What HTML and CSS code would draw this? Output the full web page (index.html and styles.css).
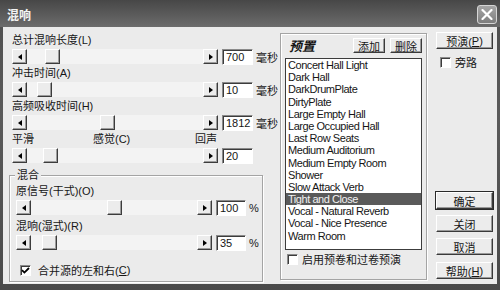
FILE: index.html
```html
<!DOCTYPE html>
<html lang="zh-CN">
<head>
<meta charset="utf-8">
<title>混响</title>
<link rel="stylesheet" href="styles.css">
</head>
<body>
<div class="window">
  <div class="titlebar">
    <span class="title">混响</span>
    <span class="close"><svg width="12" height="11" viewBox="0 0 12 11"><path d="M1.5 1 L10.5 10 M10.5 1 L1.5 10" stroke="#fff" stroke-width="2.2" stroke-linecap="round"/></svg></span>
  </div>
  <div class="client">
    <div class="left">
      <div class="label">总计混响长度(L)</div>
      <div class="slider">
        <span class="arrow"><i class="tri-l"></i></span>
        <span class="track"><span class="thumb" style="margin-left:18px"></span></span>
        <span class="arrow"><i class="tri-r"></i></span>
        <span class="field">700</span>
        <span class="unit">毫秒</span>
      </div>
      <div class="label">冲击时间(A)</div>
      <div class="slider">
        <span class="arrow"><i class="tri-l"></i></span>
        <span class="track"><span class="thumb" style="margin-left:10px"></span></span>
        <span class="arrow"><i class="tri-r"></i></span>
        <span class="field">10</span>
        <span class="unit">毫秒</span>
      </div>
      <div class="label">高频吸收时间(H)</div>
      <div class="slider">
        <span class="arrow"><i class="tri-l"></i></span>
        <span class="track"><span class="thumb" style="margin-left:73px"></span></span>
        <span class="arrow"><i class="tri-r"></i></span>
        <span class="field">1812</span>
        <span class="unit">毫秒</span>
      </div>
      <div class="label scale"><span>平滑</span><span>感觉(C)</span><span>回声</span></div>
      <div class="slider">
        <span class="arrow"><i class="tri-l"></i></span>
        <span class="track"><span class="thumb" style="margin-left:16px"></span></span>
        <span class="arrow"><i class="tri-r"></i></span>
        <span class="field">20</span>
      </div>

      <div class="group mix">
        <span class="legend">混合</span>
        <div class="label">原信号(干式)(O)</div>
        <div class="slider">
          <span class="arrow"><i class="tri-l"></i></span>
          <span class="track"><span class="thumb" style="margin-left:76px"></span></span>
          <span class="arrow"><i class="tri-r"></i></span>
          <span class="field">100</span>
          <span class="unit">%</span>
        </div>
        <div class="label gap">混响(湿式)(R)</div>
        <div class="slider">
          <span class="arrow"><i class="tri-l"></i></span>
          <span class="track"><span class="thumb" style="margin-left:11px"></span></span>
          <span class="arrow"><i class="tri-r"></i></span>
          <span class="field">35</span>
          <span class="unit">%</span>
        </div>
        <div class="check merge"><span class="box"><svg width="9" height="9" viewBox="0 0 9 9"><path d="M1 4.2 L3.4 6.6 L8 2" fill="none" stroke="#000" stroke-width="1.8"/></svg></span>合并源的左和右(<u>C</u>)</div>
      </div>
    </div>

    <div class="group presets">
      <div class="presets-head">
        <span class="presets-title">预置</span>
        <span class="btn small add">添加</span>
        <span class="btn small">删除</span>
      </div>
      <ul class="list">
        <li>Concert Hall Light</li>
        <li>Dark Hall</li>
        <li>DarkDrumPlate</li>
        <li>DirtyPlate</li>
        <li>Large Empty Hall</li>
        <li>Large Occupied Hall</li>
        <li>Last Row Seats</li>
        <li>Medium Auditorium</li>
        <li>Medium Empty Room</li>
        <li>Shower</li>
        <li>Slow Attack Verb</li>
        <li class="selected">Tight and Close</li>
        <li>Vocal - Natural Reverb</li>
        <li>Vocal - Nice Presence</li>
        <li>Warm Room</li>
      </ul>
      <div class="check preroll"><span class="box"></span>启用预卷和过卷预演</div>
    </div>

    <div class="right">
      <span class="btn">预演(<u>P</u>)</span>
      <div class="check bypass"><span class="box"></span>旁路</div>
      <div class="bottom-buttons">
        <span class="btn default">确定</span>
        <span class="btn">关闭</span>
        <span class="btn">取消</span>
        <span class="btn">帮助(<u>H</u>)</span>
      </div>
    </div>
  </div>
</div>
</body>
</html>
```

FILE: styles.css
```css
* { box-sizing: border-box; }
html, body { margin: 0; padding: 0; }
body {
  width: 500px;
  height: 290px;
  overflow: hidden;
  font-family: "Liberation Sans", "Noto Sans CJK SC", sans-serif;
  font-size: 11px;
  color: #161616;
  background: #505050;
}
.window {
  width: 500px;
  height: 290px;
  display: flex;
  flex-direction: column;
  background: linear-gradient(#4e4e4e, #5a5a5a 40%, #4a4a4a);
}
.titlebar {
  height: 27px;
  flex: none;
  display: flex;
  align-items: center;
  justify-content: space-between;
  padding: 1px 3px 0 7px;
  background: linear-gradient(#474747, #6c6c6c);
}
.title {
  color: #f4f4f4;
  font-weight: bold;
  font-size: 12px;
  font-family: "Noto Sans CJK SC", sans-serif;
}
.close {
  width: 20px;
  height: 19px;
  border: 1px solid #d6d6d6;
  border-radius: 3px;
  background: linear-gradient(#a6a6a6, #7e7e7e);
  display: flex;
  align-items: center;
  justify-content: center;
}
.client {
  flex: none;
  height: 257px;
  margin: 0 3px;
  background: #ebebeb;
  display: flex;
}
.left {
  width: 277px;
  flex: none;
  padding: 5px 0 0 6px;
}
.label {
  height: 16px;
  line-height: 16px;
  padding-left: 3px;
  white-space: nowrap;
}
.scale {
  display: grid;
  grid-template-columns: 81px 102px auto;
}
.slider {
  height: 17px;
  display: flex;
  align-items: center;
  padding-left: 3px;
  white-space: nowrap;
}
.arrow {
  flex: none;
  width: 15px;
  height: 15px;
  background: #ececec;
  border: 1px solid;
  border-color: #fff #3c3c3c #3c3c3c #fff;
  box-shadow: inset -1px -1px 0 #9c9c9c;
  display: flex;
  align-items: center;
  justify-content: center;
}
.tri-l {
  width: 0;
  height: 0;
  border-top: 3.5px solid transparent;
  border-bottom: 3.5px solid transparent;
  border-right: 4px solid #000;
}
.tri-r {
  width: 0;
  height: 0;
  border-top: 3.5px solid transparent;
  border-bottom: 3.5px solid transparent;
  border-left: 4px solid #000;
}
.track {
  flex: none;
  width: 176px;
  height: 15px;
  background: #f3f3f3;
  display: flex;
}
.thumb {
  flex: none;
  width: 15px;
  height: 15px;
  background: #ececec;
  border: 1px solid;
  border-color: #fff #3c3c3c #3c3c3c #fff;
  box-shadow: inset -1px -1px 0 #9c9c9c;
}
.field {
  flex: none;
  width: 31px;
  height: 16px;
  margin-left: 4px;
  background: #fff;
  border: 1px solid;
  border-color: #8a8a8a #fff #fff #8a8a8a;
  box-shadow: inset 1px 1px 0 #3c3c3c;
  padding: 1px 0 0 3px;
  line-height: 13px;
  font-size: 11px;
}
.unit {
  margin-left: 3px;
}

.group {
  position: relative;
  border: 1px solid #a4a4a4;
  box-shadow: inset 1px 1px 0 #fff, 1px 1px 0 #fff;
}
.legend {
  position: absolute;
  top: -9px;
  left: 5px;
  padding: 0 2px;
  background: #ebebeb;
  line-height: 16px;
}
.mix {
  width: 254px;
  height: 107px;
  margin-top: 11px;
  padding: 7px 0 0 3px;
}
.mix .track { width: 166px; }
.mix .field { width: 30px; }
.label.gap { margin-top: 2px; }
.check {
  display: flex;
  align-items: center;
  white-space: nowrap;
}
.box {
  flex: none;
  width: 11px;
  height: 11px;
  background: #fff;
  border: 1px solid;
  border-color: #8a8a8a #fff #fff #8a8a8a;
  box-shadow: inset 1px 1px 0 #3c3c3c;
  display: flex;
  align-items: center;
  justify-content: center;
}
.merge {
  height: 16px;
  margin: 11px 0 0 7px;
}
.merge .box { margin-right: 7px; }

.presets {
  flex: none;
  width: 147px;
  height: 247px;
  margin-top: 6px;
  padding: 4px 4px 0 4px;
}
.presets-head {
  height: 15px;
  display: flex;
  align-items: center;
}
.presets-title {
  font-weight: bold;
  font-style: italic;
  font-size: 13px;
  margin-left: 4px;
  font-family: "Noto Sans CJK SC", sans-serif;
}
.btn {
  flex: none;
  display: flex;
  align-items: center;
  justify-content: center;
  background: #ececec;
  border: 1px solid;
  border-color: #fff #3a3a3a #3a3a3a #fff;
  box-shadow: inset -1px -1px 0 #9a9a9a;
  white-space: nowrap;
}
.btn.small {
  width: 32px;
  height: 15px;
}
.btn.add { margin-left: auto; margin-right: 5px; }
.list {
  list-style: none;
  margin: 5px 0 0 0;
  padding: 0;
  width: 137px;
  height: 192px;
  background: #fff;
  border: 1px solid #3c3c3c;
  overflow: hidden;
}
.list li {
  height: 12.2px;
  line-height: 12.2px;
  padding-left: 2px;
  letter-spacing: -0.45px;
  white-space: nowrap;
}
.list li.selected {
  background: #5a5a5a;
  color: #f2f2f2;
}
.preroll {
  height: 14px;
  margin: 2px 0 0 2px;
}
.preroll .box { margin-right: 4px; }

.right {
  flex: none;
  width: 57px;
  margin-left: 9px;
  padding-top: 5px;
  display: flex;
  flex-direction: column;
}
.right .btn { height: 17px; }
.bypass {
  height: 14px;
  margin: 6px 0 0 4px;
}
.bypass .box { margin-right: 4px; }
.bottom-buttons {
  margin-top: 123px;
  display: flex;
  flex-direction: column;
  gap: 6px;
}
.bottom-buttons .btn:last-child { margin-top: 1px; }
.btn.default {
  outline: 1px solid #2a2a2a;
  outline-offset: 0;
}
```
